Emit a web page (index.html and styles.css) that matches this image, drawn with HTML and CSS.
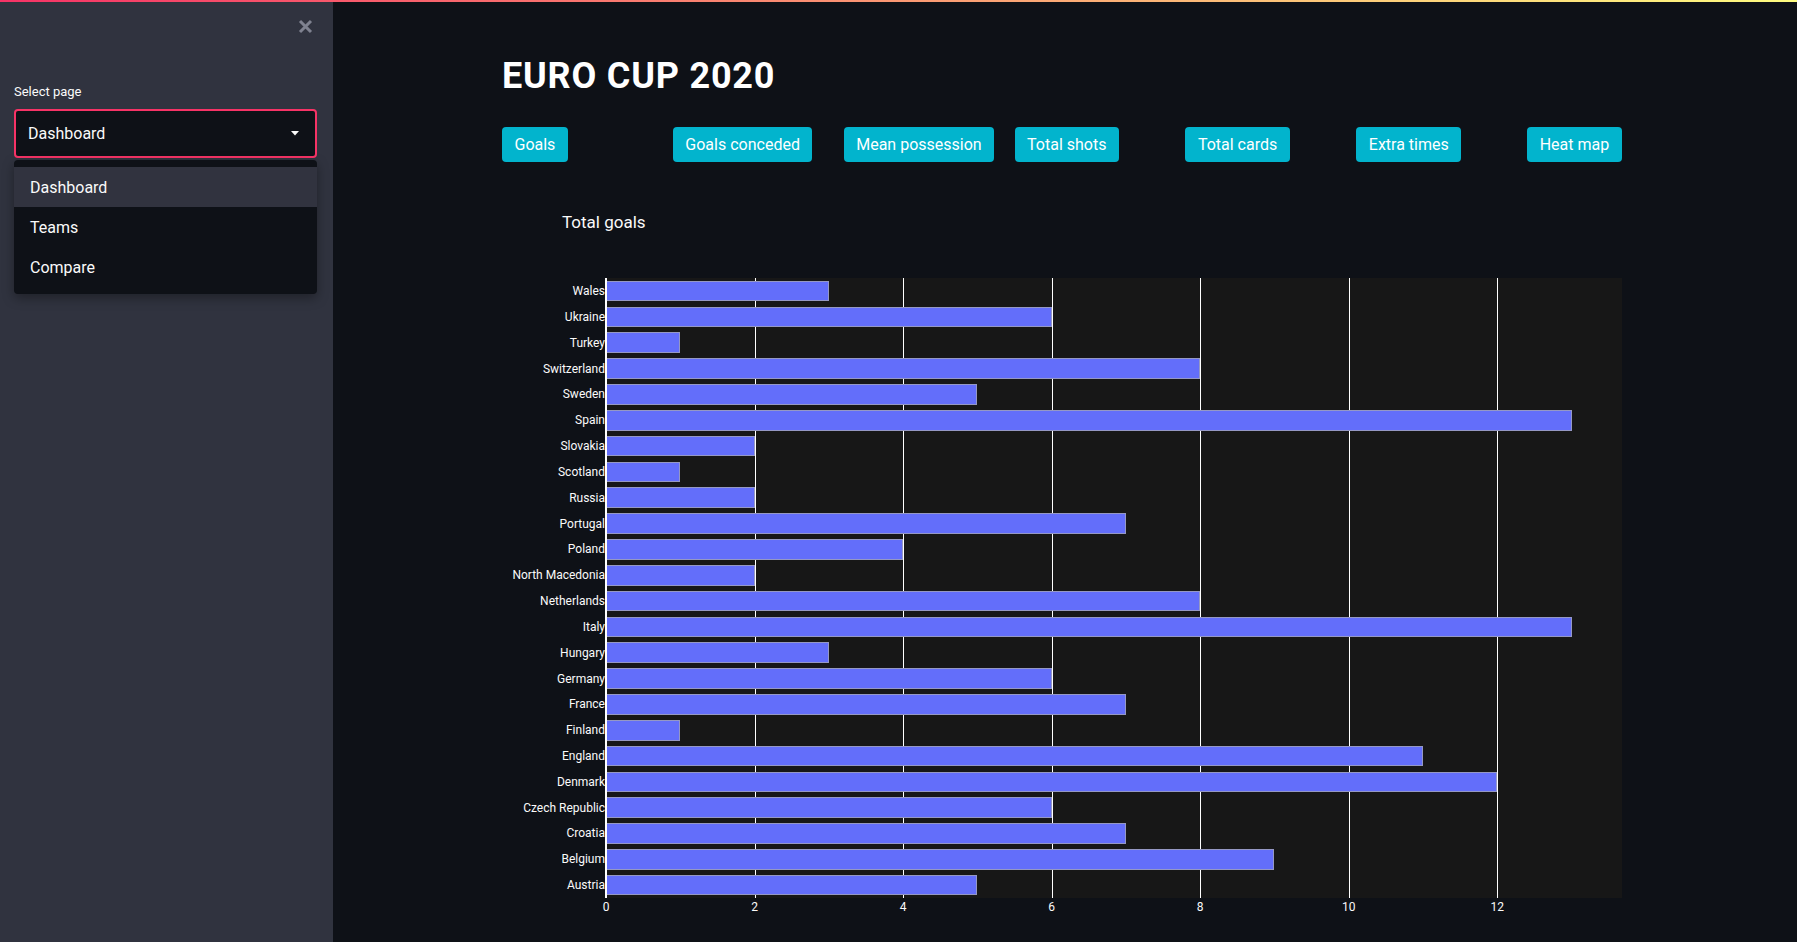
FILE: index.html
```html
<!DOCTYPE html>
<html lang="en">
<head>
<meta charset="utf-8">
<title>EURO CUP 2020</title>
<link rel="stylesheet" href="styles.css">
</head>
<body>
<div class="decoration"></div>
<div class="app">
  <aside class="sidebar">
    <div class="sidebar-top">
      <button class="close" aria-label="Close sidebar">
        <svg width="15" height="15" viewBox="0 0 15 15"><path d="M2 2 L13 13 M13 2 L2 13" stroke="#7f8290" stroke-width="3" stroke-linecap="butt"/></svg>
      </button>
    </div>
    <div class="field">
      <label class="field-label">Select page</label>
      <div class="select-wrap">
        <div class="select">
          <span>Dashboard</span>
          <svg class="caret" width="8" height="5" viewBox="0 0 8 5"><path d="M0 0 L8 0 L4 4.5 Z" fill="#fafafa"/></svg>
        </div>
        <ul class="menu">
          <li class="menu-item active">Dashboard</li>
          <li class="menu-item">Teams</li>
          <li class="menu-item">Compare</li>
        </ul>
      </div>
    </div>
  </aside>
  <main class="main">
    <div class="content">
      <h1 class="title">EURO CUP 2020</h1>
      <div class="tabs">
        <div class="tab-col"><button class="tab">Goals</button></div>
        <div class="tab-col"><button class="tab">Goals conceded</button></div>
        <div class="tab-col"><button class="tab">Mean possession</button></div>
        <div class="tab-col"><button class="tab">Total shots</button></div>
        <div class="tab-col"><button class="tab">Total cards</button></div>
        <div class="tab-col"><button class="tab">Extra times</button></div>
        <div class="tab-col"><button class="tab">Heat map</button></div>
      </div>
      <section class="chart">
        <h2 class="chart-title">Total goals</h2>
        <div class="chart-body">
          <div class="ylabels">
            <div class="ylabel">Wales</div>
            <div class="ylabel">Ukraine</div>
            <div class="ylabel">Turkey</div>
            <div class="ylabel">Switzerland</div>
            <div class="ylabel">Sweden</div>
            <div class="ylabel">Spain</div>
            <div class="ylabel">Slovakia</div>
            <div class="ylabel">Scotland</div>
            <div class="ylabel">Russia</div>
            <div class="ylabel">Portugal</div>
            <div class="ylabel">Poland</div>
            <div class="ylabel">North Macedonia</div>
            <div class="ylabel">Netherlands</div>
            <div class="ylabel">Italy</div>
            <div class="ylabel">Hungary</div>
            <div class="ylabel">Germany</div>
            <div class="ylabel">France</div>
            <div class="ylabel">Finland</div>
            <div class="ylabel">England</div>
            <div class="ylabel">Denmark</div>
            <div class="ylabel">Czech Republic</div>
            <div class="ylabel">Croatia</div>
            <div class="ylabel">Belgium</div>
            <div class="ylabel">Austria</div>
          </div>
          <div class="plot-col">
            <div class="plot">
              <div class="gridline" style="left:14.62%"></div>
              <div class="gridline" style="left:29.24%"></div>
              <div class="gridline" style="left:43.86%"></div>
              <div class="gridline" style="left:58.48%"></div>
              <div class="gridline" style="left:73.10%"></div>
              <div class="gridline" style="left:87.72%"></div>
              <div class="rows">
                <div class="row"><div class="bar" style="width:21.93%"></div></div>
                <div class="row"><div class="bar" style="width:43.86%"></div></div>
                <div class="row"><div class="bar" style="width:7.31%"></div></div>
                <div class="row"><div class="bar" style="width:58.48%"></div></div>
                <div class="row"><div class="bar" style="width:36.55%"></div></div>
                <div class="row"><div class="bar" style="width:95.03%"></div></div>
                <div class="row"><div class="bar" style="width:14.62%"></div></div>
                <div class="row"><div class="bar" style="width:7.31%"></div></div>
                <div class="row"><div class="bar" style="width:14.62%"></div></div>
                <div class="row"><div class="bar" style="width:51.17%"></div></div>
                <div class="row"><div class="bar" style="width:29.24%"></div></div>
                <div class="row"><div class="bar" style="width:14.62%"></div></div>
                <div class="row"><div class="bar" style="width:58.48%"></div></div>
                <div class="row"><div class="bar" style="width:95.03%"></div></div>
                <div class="row"><div class="bar" style="width:21.93%"></div></div>
                <div class="row"><div class="bar" style="width:43.86%"></div></div>
                <div class="row"><div class="bar" style="width:51.17%"></div></div>
                <div class="row"><div class="bar" style="width:7.31%"></div></div>
                <div class="row"><div class="bar" style="width:80.41%"></div></div>
                <div class="row"><div class="bar" style="width:87.72%"></div></div>
                <div class="row"><div class="bar" style="width:43.86%"></div></div>
                <div class="row"><div class="bar" style="width:51.17%"></div></div>
                <div class="row"><div class="bar" style="width:65.79%"></div></div>
                <div class="row"><div class="bar" style="width:36.55%"></div></div>
              </div>
              <div class="zeroline"></div>
            </div>
            <div class="xticks">
              <span class="xtick" style="left:0%">0</span>
              <span class="xtick" style="left:14.62%">2</span>
              <span class="xtick" style="left:29.24%">4</span>
              <span class="xtick" style="left:43.86%">6</span>
              <span class="xtick" style="left:58.48%">8</span>
              <span class="xtick" style="left:73.10%">10</span>
              <span class="xtick" style="left:87.72%">12</span>
            </div>
          </div>
        </div>
      </section>
    </div>
  </main>
</div>
</body>
</html>
```
FILE: styles.css
```css
* { box-sizing: border-box; }

html, body {
  margin: 0;
  padding: 0;
  height: 100%;
}

body {
  background: #0e1117;
  color: #fafafa;
  font-family: Roboto, "Noto Sans", "Liberation Sans", sans-serif;
  overflow: hidden;
}

.decoration {
  position: fixed;
  top: 0;
  left: 0;
  right: 0;
  height: 2px;
  background: linear-gradient(90deg, #f63366, #fffd80);
  z-index: 10;
}

.app {
  display: flex;
  height: 100vh;
}

/* ---------- sidebar ---------- */
.sidebar {
  width: 333px;
  flex: 0 0 333px;
  background: #30333f;
  padding: 0 16px 0 14px;
  display: flex;
  flex-direction: column;
}

.sidebar-top {
  height: 52px;
  display: flex;
  align-items: center;
  justify-content: flex-end;
  padding-right: 4px;
}

.close {
  background: none;
  border: 0;
  padding: 0;
  width: 15px;
  height: 15px;
  display: flex;
  cursor: pointer;
}

.field {
  margin-top: 31px;
  display: flex;
  flex-direction: column;
}

.field-label {
  font-size: 13px;
  line-height: 18px;
  color: #fafafa;
  margin-bottom: 8px;
}

.select-wrap {
  position: relative;
}

.select {
  height: 49px;
  border: 2px solid #f63366;
  border-radius: 4px;
  background: #0e1117;
  display: flex;
  align-items: center;
  justify-content: space-between;
  padding: 0 16px 0 12px;
  font-size: 16px;
}

.caret {
  display: block;
}

.menu {
  position: absolute;
  top: calc(100% + 2px);
  left: 0;
  right: 0;
  margin: 0;
  padding: 7px 0;
  list-style: none;
  background: #0e1117;
  border-radius: 4px;
  box-shadow: 0 4px 12px rgba(0, 0, 0, 0.35);
  z-index: 5;
}

.menu-item {
  height: 40px;
  display: flex;
  align-items: center;
  padding-left: 16px;
  font-size: 16px;
  color: #fafafa;
}

.menu-item.active {
  background: #31333f;
}

/* ---------- main ---------- */
.main {
  flex: 1;
  padding: 55px 0 0 169px;
}

.content {
  width: 1180px;
}

.title {
  margin: 0;
  font-size: 36px;
  line-height: 1.2;
  font-weight: 700;
  letter-spacing: 0.8px;
  color: #ffffff;
}

.tabs {
  margin-top: 29px;
  display: grid;
  grid-template-columns: repeat(7, 1fr);
  column-gap: 16px;
}

.tab-col {
  display: flex;
}

.tab {
  height: 35px;
  padding: 0 12.5px;
  border: 0;
  border-radius: 4px;
  background: #02b4cd;
  color: #ffffff;
  font-family: inherit;
  font-size: 16px;
  line-height: 35px;
  cursor: pointer;
}

/* ---------- chart ---------- */
.chart {
  margin-top: 50px;
}

.chart-title {
  margin: 0 0 46px 0;
  padding-left: 60px;
  font-size: 17px;
  line-height: 20px;
  font-weight: 400;
  color: #fafafa;
}

.chart-body {
  display: flex;
}

.ylabels {
  width: 104px;
  height: 620px;
  display: flex;
  flex-direction: column;
}

.ylabel {
  flex: 1;
  display: flex;
  align-items: center;
  justify-content: flex-end;
  padding-right: 1px;
  font-size: 12px;
  color: #fafafa;
  white-space: nowrap;
}

.plot-col {
  width: 1016px;
}

.plot {
  position: relative;
  height: 620px;
  background: #171717;
}

.gridline {
  position: absolute;
  top: 0;
  bottom: 0;
  width: 1px;
  background: #ffffff;
}

.rows {
  position: relative;
  z-index: 1;
  height: 100%;
  display: flex;
  flex-direction: column;
}

.row {
  flex: 1;
  display: flex;
  align-items: center;
}

.bar {
  height: 80%;
  background: #636efa;
  border: 1px solid #9598c4;
}

.zeroline {
  position: absolute;
  top: 0;
  bottom: 0;
  left: -1px;
  width: 2px;
  background: #ffffff;
  z-index: 2;
}

.xticks {
  position: relative;
  height: 16px;
  margin-top: 2px;
}

.xtick {
  position: absolute;
  top: 0;
  transform: translateX(-50%);
  font-size: 12px;
  line-height: 14px;
  color: #fafafa;
}
```
